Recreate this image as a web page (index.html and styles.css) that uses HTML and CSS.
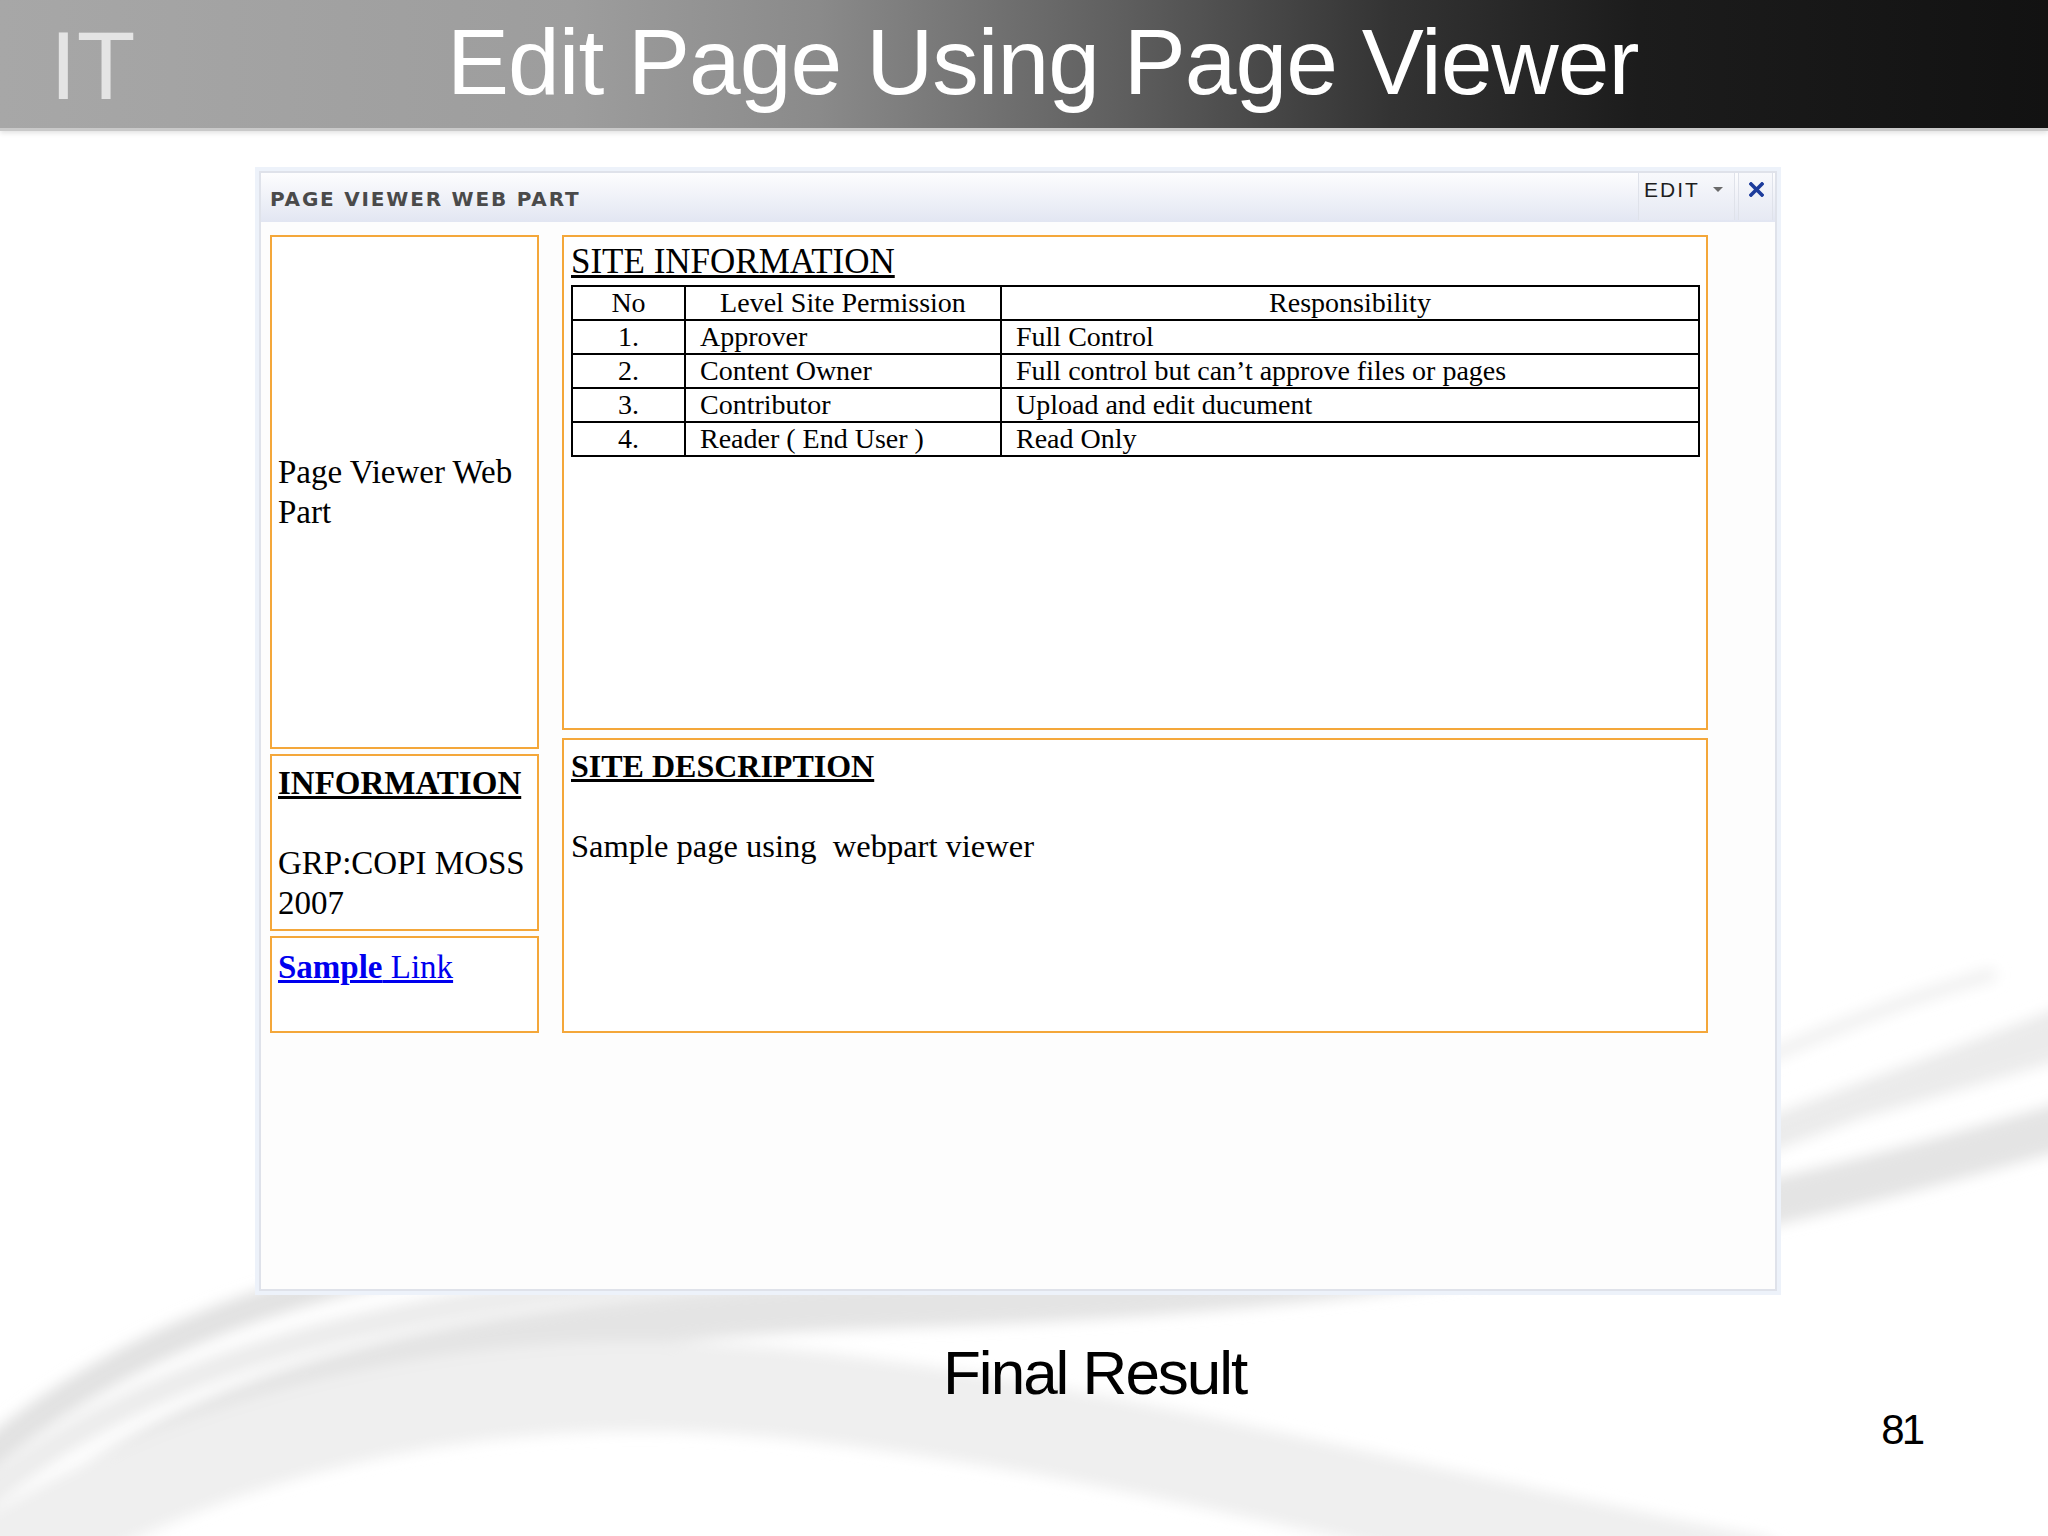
FILE: index.html
```html
<!DOCTYPE html>
<html lang="en">
<head>
  <meta charset="UTF-8">
  <title>Edit Page Using Page Viewer</title>
  <link rel="stylesheet" href="styles.css">
</head>
<body>
  <svg class="swoosh" viewBox="0 0 2048 1536" preserveAspectRatio="none">
    <defs>
      <filter id="soft" x="-10%" y="-10%" width="120%" height="120%">
        <feGaussianBlur stdDeviation="7"/>
      </filter>
    </defs>
    <g filter="url(#soft)" fill="none" stroke-linecap="round">
      <path class="s1" d="M-20 1580 C150 1400 420 1320 900 1305 S1700 1235 2100 1115"/>
      <path class="s2" d="M-40 1520 C120 1370 380 1285 860 1268 S1650 1170 2100 1035"/>
      <path class="s3" d="M-60 1600 C180 1430 480 1360 800 1395 S1350 1500 1750 1580"/>
      <path class="s4" d="M1600 1200 C1800 1120 1920 1080 2100 1010"/>
      <path class="s5" d="M1650 1110 C1800 1040 1900 1000 1990 975"/>
      <path class="s6" d="M-40 1480 C100 1350 300 1260 620 1240"/>
    </g>
  </svg>

  <header class="slide-head">
    <span class="logo">IT</span>
    <h1>Edit Page Using Page Viewer</h1>
  </header>

  <main class="stage">
    <section class="webpart">
      <div class="wp-bar">
        <span class="wp-title">PAGE VIEWER WEB PART</span>
        <div class="wp-tools">
          <span class="wp-edit">EDIT
            <svg class="caret" width="10" height="6" viewBox="0 0 10 6"><path d="M0 0 H10 L5 5 Z" fill="#6a6a6a"/></svg>
          </span>
          <span class="wp-close">
            <svg width="15" height="15" viewBox="0 0 15 15"><path d="M2 2 L13 13 M13 2 L2 13" stroke="#1d3c9c" stroke-width="3.6" stroke-linecap="square"/></svg>
          </span>
        </div>
      </div>

      <div class="wp-body">
        <div class="col-left">
          <div class="box box-intro">
            <p>Page Viewer Web Part</p>
          </div>
          <div class="box box-info">
            <h3>INFORMATION</h3>
            <p>GRP:COPI MOSS 2007</p>
          </div>
          <div class="box box-link">
            <a href="#"><b>Sample</b> Link</a>
          </div>
        </div>

        <div class="col-right">
          <div class="box box-site">
            <h2>SITE INFORMATION</h2>
            <table class="perm">
              <tr>
                <th class="c-no">No</th>
                <th class="c-level">Level Site Permission</th>
                <th>Responsibility</th>
              </tr>
              <tr><td class="num">1.</td><td>Approver</td><td>Full Control</td></tr>
              <tr><td class="num">2.</td><td>Content Owner</td><td>Full control but can’t approve files or pages</td></tr>
              <tr><td class="num">3.</td><td>Contributor</td><td>Upload and edit ducument</td></tr>
              <tr><td class="num">4.</td><td>Reader ( End User )</td><td>Read Only</td></tr>
            </table>
          </div>
          <div class="box box-desc">
            <h3>SITE DESCRIPTION</h3>
            <p>Sample page using &nbsp;webpart viewer</p>
          </div>
        </div>
      </div>
    </section>
  </main>

  <footer class="slide-foot">
    <span class="caption">Final Result</span>
    <span class="page-no">81</span>
  </footer>
</body>
</html>
```

FILE: styles.css
```css
:root {
  --orange: #f4a73a;
  --panel-line: #dfe2ea;
  --link: #0000ee;
}
body {
  margin: 0;
  width: 2048px;
  height: 1536px;
  position: relative;
  overflow: hidden;
  background: #fff;
  font-family: "Liberation Sans", Arial, sans-serif;
}
.swoosh {
  position: absolute;
  top: 0;
  left: 0;
  width: 2048px;
  height: 1536px;
  z-index: 0;
}
.swoosh .s1 { stroke: #e4e4e4; stroke-width: 46; }
.swoosh .s2 { stroke: #ececec; stroke-width: 26; }
.swoosh .s3 { stroke: #efefef; stroke-width: 90; }
.swoosh .s4 { stroke: #ebebeb; stroke-width: 34; }
.swoosh .s5 { stroke: #f1f1f1; stroke-width: 14; }
.swoosh .s6 { stroke: #e2e2e2; stroke-width: 30; }
.slide-head,
.stage,
.slide-foot {
  position: relative;
  z-index: 1;
}

/* bandeau du haut */
.slide-head {
  height: 128px;
  display: flex;
  background: linear-gradient(to right, #a7a7a7 0%, #9d9d9d 28%, #8a8a8a 40%, #5e5e5e 55%, #333 68%, #1c1c1c 80%, #121212 100%);
  border-bottom: 3px solid #c9c9c9;
  box-shadow: 0 2px 5px rgba(0, 0, 0, 0.12);
}
.logo {
  flex: 0 0 447px;
  box-sizing: border-box;
  padding: 2px 0 0 50px;
  font-size: 96px;
  line-height: 128px;
  color: #e4e4e4;
}
.slide-head h1 {
  margin: -2px 0 0;
  font-weight: normal;
  font-size: 93px;
  letter-spacing: -1px;
  line-height: 128px;
  color: #fff;
}

/* web part */
.stage {
  padding: 40px 0 0 259px;
}
.webpart {
  width: 1518px;
  height: 1120px;
  box-sizing: border-box;
  border: 2px solid var(--panel-line);
  box-shadow: 0 0 0 4px #edf2fa;
  background: #fdfdfd;
  display: flex;
  flex-direction: column;
}
.wp-bar {
  height: 49px;
  flex: 0 0 49px;
  display: flex;
  align-items: flex-start;
  background: linear-gradient(#fdfdfe, #e2e6f2);
}
.wp-title {
  margin: 14px 0 0 9px;
  font-family: "DejaVu Sans", Verdana, sans-serif;
  font-weight: bold;
  font-size: 20px;
  line-height: 24px;
  letter-spacing: 1.8px;
  color: #4a4a4a;
}
.wp-tools {
  margin-left: auto;
  margin-right: 2px;
  display: flex;
  gap: 3px;
  height: 47px;
}
.wp-edit,
.wp-close {
  background: linear-gradient(#f8f9fc, #e6e9f3);
  border-left: 1px solid var(--panel-line);
  border-right: 1px solid var(--panel-line);
}
.wp-edit {
  width: 97px;
  box-sizing: border-box;
  padding: 5px 0 0 5px;
  font-size: 21px;
  line-height: 24px;
  letter-spacing: 2px;
  color: #1e1e1e;
}
.caret {
  margin-left: 6px;
  vertical-align: 4px;
}
.wp-close {
  width: 35px;
  box-sizing: border-box;
  padding: 9px 0 0 10px;
}
.wp-body {
  flex: 1;
  display: flex;
  gap: 23px;
  padding: 13px 0 0 9px;
}
.col-left {
  width: 269px;
  display: flex;
  flex-direction: column;
  gap: 5px;
}
.col-right {
  width: 1146px;
  display: flex;
  flex-direction: column;
  gap: 8px;
}
.box {
  box-sizing: border-box;
  border: 2px solid var(--orange);
  background: #fff;
  padding: 7px 6px 0;
  font-family: "Liberation Serif", "Times New Roman", serif;
  font-size: 33px;
  line-height: 40px;
  color: #000;
}
.box p,
.box h2,
.box h3 {
  margin: 0;
}
.box h3 {
  font-size: 33px;
  font-weight: bold;
  text-decoration: underline;
  margin-bottom: 40px;
}
.box-intro {
  height: 514px;
  display: flex;
  align-items: center;
  padding-top: 0;
}
.box-info { height: 177px; }
.box-link { height: 97px; padding-top: 9px; }
.box-link a {
  color: var(--link);
  text-decoration: underline;
}
.box-site {
  height: 495px;
  padding: 5px 7px 0;
}
.box-site h2 {
  font-size: 35px;
  font-weight: normal;
  text-decoration: underline;
}
.box-desc {
  height: 295px;
  padding: 6px 7px 0;
}
.box-desc h3 { font-size: 32px; }
.box-desc p { font-size: 32.5px; }

/* tableau des permissions */
.perm {
  margin-top: 3px;
  width: 1129px;
  border-collapse: collapse;
  border: 2px solid #000;
  font-size: 28px;
  line-height: 30px;
}
.perm th,
.perm td {
  border: 2px solid #000;
  height: 32px;
  padding: 0 14px;
  text-align: left;
  font-weight: normal;
  white-space: nowrap;
}
.perm th { text-align: center; }
.perm .c-no { width: 83px; }
.perm .c-level { width: 286px; }
.perm td.num { text-align: center; }

/* bas de page */
.slide-foot {
  display: flex;
  align-items: flex-start;
  margin-top: 51px;
  padding-left: 943px;
  color: #000;
}
.caption {
  font-size: 62px;
  letter-spacing: -2px;
  line-height: 62px;
}
.page-no {
  margin: 67px 126px 0 auto;
  font-size: 42px;
  letter-spacing: -3px;
  line-height: 42px;
}
```
